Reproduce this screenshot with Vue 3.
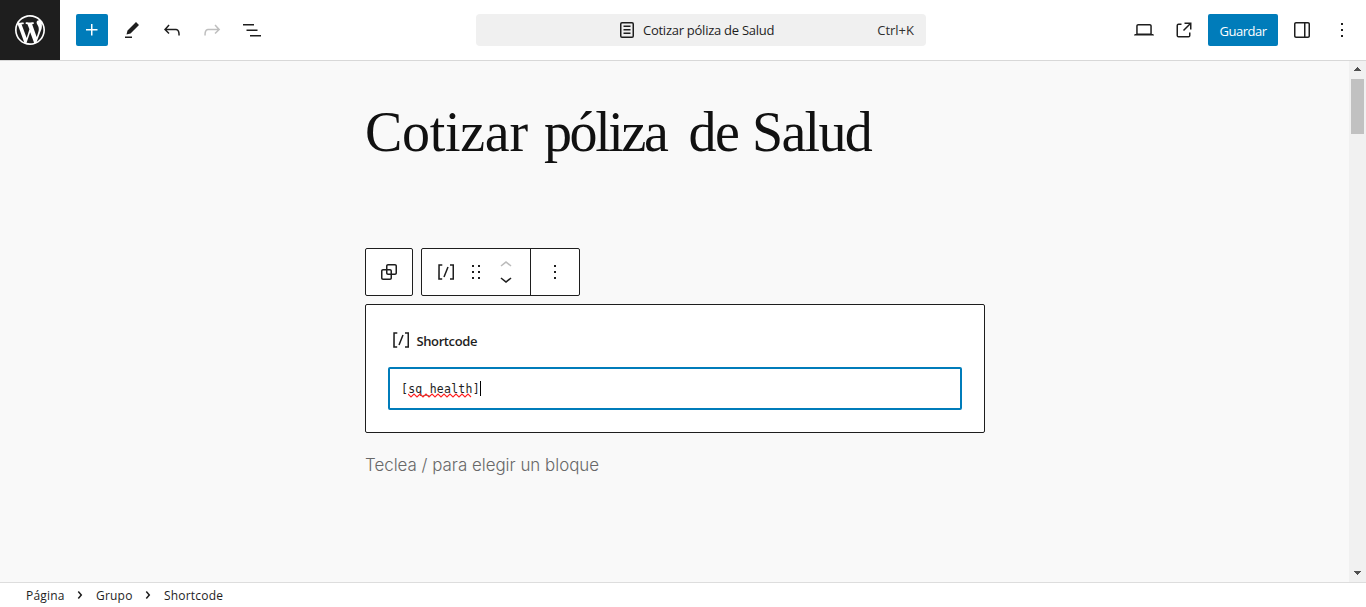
<script setup>
const icons = {
  wordpress: 'M20 10c0-5.51-4.49-10-10-10C4.48 0 0 4.49 0 10c0 5.52 4.48 10 10 10 5.51 0 10-4.48 10-10zM7.78 15.37L4.37 6.22c.55-.02 1.17-.08 1.17-.08.5-.06.44-1.13-.06-1.11 0 0-1.45.11-2.37.11-.18 0-.37 0-.58-.01C4.12 2.69 6.87 1.11 10 1.11c2.33 0 4.45.87 6.05 2.34-.68-.11-1.65.39-1.65 1.58 0 .74.45 1.36.9 2.1.35.61.55 1.36.55 2.46 0 1.49-1.4 5-1.4 5l-3.03-8.37c.54-.02.82-.17.82-.17.5-.05.44-1.25-.06-1.22 0 0-1.44.12-2.38.12-.87 0-2.33-.12-2.33-.12-.5-.03-.56 1.2-.06 1.22l.92.08 1.26 3.41zM17.41 10c.24-.64.74-1.87.43-4.25.7 1.29 1.05 2.71 1.05 4.25 0 3.29-1.73 6.24-4.4 7.78.97-2.59 1.94-5.2 2.92-7.78zM6.1 18.09C3.12 16.65 1.11 13.53 1.11 10c0-1.3.23-2.48.72-3.59C3.25 10.3 4.67 14.2 6.1 18.09zm4.03-6.63l2.58 6.98c-.86.29-1.76.45-2.71.45-.79 0-1.57-.11-2.29-.33.81-2.38 1.62-4.74 2.42-7.1z',
  plus: 'M11 12.5V17.5H12.5V12.5H17.5V11H12.5V6H11V11H6V12.5H11Z',
  edit: 'm19 7-3-3-8.5 8.5-1 4 4-1L19 7Zm-7 11.5H5V20h7v-1.5Z',
  undo: 'M18.3 11.7c-.6-.6-1.4-.9-2.3-.9H6.7l2.9-3.3-1.1-1-4.5 5L8.5 16l1-1-2.7-2.7H16c.5 0 .9.2 1.3.5 1 1 1 3.4 1 4.5v.3h1.5v-.2c0-1.5 0-4.3-1.5-5.7z',
  redo: 'M15.6 6.5l-1.1 1 2.9 3.3H8c-.9 0-1.7.3-2.3.9-1.4 1.5-1.4 4.2-1.4 5.6v.2h1.5v-.3c0-1.1 0-3.5 1-4.5.3-.3.7-.5 1.3-.5h9.2L14.5 15l1.1 1.1 4.6-4.6-4.6-5z',
  list: 'M3 6h11v1.5H3V6Zm3.5 5.5h11V13h-11v-1.5ZM21 17H10v1.5h11V17Z',
  page: 'M15.5 7.5h-7V9h7V7.5Zm-7 3.5h7v1.5h-7V11Zm7 3.5h-7V16h7v-1.5ZM17 4H7a2 2 0 0 0-2 2v12a2 2 0 0 0 2 2h10a2 2 0 0 0 2-2V6a2 2 0 0 0-2-2ZM7 5.5h10a.5.5 0 0 1 .5.5v12a.5.5 0 0 1-.5.5H7a.5.5 0 0 1-.5-.5V6a.5.5 0 0 1 .5-.5Z',
  desktop: 'M20.5 16h-.7V8c0-1.1-.9-2-2-2H6.2c-1.1 0-2 .9-2 2v8h-.7c-.8 0-1.5.7-1.5 1.5h20c0-.8-.7-1.5-1.5-1.5zM5.7 8c0-.3.2-.5.5-.5h11.6c.3 0 .5.2.5.5v7.6H5.7V8z',
  external: 'M19.5 4.5h-7V6h4.44l-5.97 5.97 1.06 1.06L18 7.06v4.44h1.5v-7Zm-13 1a2 2 0 0 0-2 2v10a2 2 0 0 0 2 2h10a2 2 0 0 0 2-2v-3H17v3a.5.5 0 0 1-.5.5h-10a.5.5 0 0 1-.5-.5v-10a.5.5 0 0 1 .5-.5h3V5.5h-3Z',
  drawer: 'M18 4H6c-1.1 0-2 .9-2 2v12c0 1.1.9 2 2 2h12c1.1 0 2-.9 2-2V6c0-1.1-.9-2-2-2zm-4 14.5H6c-.3 0-.5-.2-.5-.5V6c0-.3.2-.5.5-.5h8v13zm4.5-.5c0 .3-.2.5-.5.5h-2.5v-13H18c.3 0 .5.2.5.5v12z',
  more: 'M13 19h-2v-2h2v2zm0-6h-2v-2h2v2zm0-6h-2V5h2v2z',
  group: 'M18 4h-7c-1.1 0-2 .9-2 2v3H6c-1.1 0-2 .9-2 2v7c0 1.1.9 2 2 2h7c1.1 0 2-.9 2-2v-3h3c1.1 0 2-.9 2-2V6c0-1.1-.9-2-2-2zm-4.5 14c0 .3-.2.5-.5.5H6c-.3 0-.5-.2-.5-.5v-7c0-.3.2-.5.5-.5h3V13c0 1.1.9 2 2 2h2.5v3zm0-4.5H11c-.3 0-.5-.2-.5-.5v-2.5H13c.3 0 .5.2.5.5v2.5zm5-.5c0 .3-.2.5-.5.5h-3V11c0-1.1-.9-2-2-2h-2.5V6c0-.3.2-.5.5-.5h7c.3 0 .5.2.5.5v7z',
  shortcode: 'M16 4.2v1.5h2.5v12.5H16v1.5h4V4.2h-4zM4.2 19.8h4v-1.5H5.8V5.8h2.5V4.2h-4l-.1 15.6zm5.1-3.1l1.4.6 4-10-1.4-.6-4 10z',
  drag: 'M8 7h2V5H8v2zm0 6h2v-2H8v2zm0 6h2v-2H8v2zm6-14v2h2V5h-2zm0 8h2v-2h-2v2zm0 6h2v-2h-2v2z',
  up: 'M6.5 12.4L12 8l5.5 4.4-.9 1.2L12 10l-4.5 3.6-1-1.2z',
  down: 'M17.5 11.6L12 16l-5.5-4.4.9-1.2L12 14l4.5-3.6 1 1.2z',
  right: 'M10.86 8.04L14.28 12.03L10.86 16.02L9.72 15.04L12.3 12.03L9.72 9.02L10.86 8.04Z',
}
const left = ['edit', 'undo', 'redo', 'list']
const crumbs = ['Página', 'Grupo', 'Shortcode']
</script>

<template>
  <div class="editor">
    <header class="topbar">
      <div class="logo">
        <svg width="36" height="36" viewBox="-2 -2 24 24"><path :d="icons.wordpress" /></svg>
      </div>
      <div class="tools">
        <button class="btn primary"><svg class="ic"><path :d="icons.plus" /></svg></button>
        <button v-for="n in left" :key="n" class="btn" :class="{ off: n === 'redo' }">
          <svg class="ic"><path :d="icons[n]" /></svg>
        </button>
      </div>
      <div class="command">
        <svg class="ic"><path fill-rule="evenodd" :d="icons.page" /></svg>
        <span class="doc">Cotizar póliza de Salud</span>
        <span class="keys">Ctrl+K</span>
      </div>
      <div class="actions">
        <button class="btn"><svg class="ic"><path :d="icons.desktop" /></svg></button>
        <button class="btn"><svg class="ic"><path :d="icons.external" /></svg></button>
        <button class="btn save">Guardar</button>
        <button class="btn"><svg class="ic"><path :d="icons.drawer" /></svg></button>
        <button class="btn"><svg class="ic"><path :d="icons.more" /></svg></button>
      </div>
    </header>

    <div class="stage">
      <main class="canvas">
        <h1><span class="w1">Cotizar </span><span class="w2">póliza </span><span class="w3">de </span><span class="w4">Salud</span></h1>
        <div class="toolbars">
          <div class="bar parent"><svg class="ic"><path :d="icons.group" /></svg></div>
          <div class="bar block">
            <svg class="ic"><path :d="icons.shortcode" /></svg>
            <svg class="ic drag"><path :d="icons.drag" /></svg>
            <div class="movers">
              <svg class="mv dim" viewBox="5 7 14 8"><path :d="icons.up" /></svg>
              <svg class="mv" viewBox="5 9 14 8"><path :d="icons.down" /></svg>
            </div>
            <div class="opts"><svg class="ic"><path :d="icons.more" /></svg></div>
          </div>
        </div>
        <section class="shortcode">
          <div class="label">
            <svg class="ic"><path :d="icons.shortcode" /></svg>
            <span>Shortcode</span>
          </div>
          <div class="field">
            <span>[</span><span class="spell">sq_health<svg class="wave" width="66" height="5" viewBox="0 0 66 5"><path d="M0 1l3 3 3-3 3 3 3-3 3 3 3-3 3 3 3-3 3 3 3-3 3 3 3-3 3 3 3-3 3 3 3-3 3 3 3-3 3 3 3-3 3 3" /></svg></span><span>]</span><i class="caret"></i>
          </div>
        </section>
        <p class="hint">Teclea / para elegir un bloque</p>
      </main>
      <div class="scroll">
        <svg width="17" height="17" viewBox="0 0 17 17" shape-rendering="crispEdges"><path d="M4.5 10h8L8.5 5.5z" /></svg>
        <div class="thumb"></div>
        <svg width="17" height="17" viewBox="0 0 17 17" shape-rendering="crispEdges"><path d="M4.5 6h8l-4 4.5z" /></svg>
      </div>
    </div>

    <footer class="crumbs">
      <template v-for="(c, i) in crumbs" :key="c">
        <svg v-if="i" class="ic sep"><path :d="icons.right" /></svg>
        <span :class="'c' + i">{{ c }}</span>
      </template>
    </footer>
  </div>
</template>

<style>
body { margin: 0; overflow: hidden; }
</style>

<style scoped>
* { box-sizing: border-box; }
.editor { width: 1366px; height: 607px; display: flex; flex-direction: column; background: #fff; color: #1e1e1e; font: 13px/20px "Open Sans", "Noto Sans", sans-serif; overflow: hidden; }
svg { display: block; flex: none; fill: currentColor; }
.ic { width: 24px; height: 24px; }
.topbar { height: 61px; flex: none; display: flex; align-items: flex-start; border-bottom: 1px solid #d8d8d8; }
.logo { width: 60px; height: 60px; background: #1e1e1e; color: #fff; display: flex; align-items: center; justify-content: center; }
.tools { display: flex; gap: 8px; padding: 14px 0 0 16px; width: 416px; }
.btn { width: 32px; height: 32px; padding: 0; border: 0; border-radius: 2px; background: none; color: #1e1e1e; display: flex; align-items: center; justify-content: center; font: inherit; }
.primary, .save { background: #007cba; color: #fff; }
.off { color: #bfbfbf; }
.save { width: 70px; font-weight: 500; letter-spacing: -0.5px; padding-top: 2px; }
.command { width: 450px; height: 32px; margin-top: 14px; background: #f0f0f0; border-radius: 4px; display: flex; align-items: center; padding: 0 12px 0 139px; }
.doc { margin-left: 4px; width: 170px; white-space: nowrap; letter-spacing: -0.26px; }
.keys { margin-left: auto; color: #2f2f2f; white-space: nowrap; }
.actions { margin-left: auto; display: flex; gap: 8px; padding: 14px 8px 0 0; }
.stage { flex: 1; display: flex; min-height: 0; background: #f9f9f9; }
.canvas { flex: 1; padding-left: 365px; }
h1 { margin: 35px 0 0; height: 74px; font: 400 56px/72px "Liberation Serif", serif; color: #111; white-space: pre; display: flex; }
.w1 { width: 179px; letter-spacing: -0.3px; }
.w2 { width: 144.5px; letter-spacing: -2.4px; }
.w3 { width: 63.5px; letter-spacing: -1.5px; }
.w4 { letter-spacing: -1.7px; }
.toolbars { display: flex; gap: 8px; margin-top: 78px; }
.bar { height: 48px; background: #fff; border: 1px solid #1e1e1e; border-radius: 2px; display: flex; align-items: center; }
.parent { width: 48px; justify-content: center; }
.block { width: 159px; padding-left: 12px; }
.drag { margin-left: 6px; }
.movers { display: flex; flex-direction: column; gap: 8px; margin-left: 11px; width: 14px; }
.mv { width: 14px; height: 8px; }
.dim { color: #bbb; }
.opts { margin-left: auto; width: 49px; height: 46px; border-left: 1px solid #1e1e1e; display: flex; align-items: center; justify-content: center; }
.shortcode { width: 620px; height: 129px; margin-top: 8px; background: #fff; border: 1px solid #1e1e1e; border-radius: 2px; padding: 23px 22px 0; }
.label { display: flex; align-items: center; height: 24px; font-weight: 600; padding-left: 1px; }
.label span { margin-left: 3.5px; letter-spacing: -0.4px; padding-top: 2px; }
.field { margin-top: 15px; width: 574px; height: 43px; border: 2px solid #007cba; border-radius: 2px; display: flex; align-items: center; padding-left: 11px; font: 11.5px/20px "DejaVu Sans Mono", monospace; letter-spacing: 0.24px; }
.field > span { padding-top: 1px; }
.spell { position: relative; }
.wave { position: absolute; left: 0; top: 15px; fill: none; stroke: #f22; stroke-width: 1.1; }
.caret { width: 1px; height: 15px; background: #000; }
.hint { margin: 19px 0 0; font: 300 16.9px/27px Inter, sans-serif; color: #686868; white-space: nowrap; }
.scroll { width: 17px; background: #f1f1f1; color: #505050; display: flex; flex-direction: column; }
.thumb { width: 13px; height: 55px; margin: 1px 2px auto; background: #c1c1c1; }
.crumbs { height: 25px; flex: none; border-top: 1px solid #ddd; display: flex; align-items: center; padding-left: 26px; font-size: 12px; }
.crumbs span { white-space: nowrap; letter-spacing: 0.2px; padding-top: 2px; }
.sep { margin: 0 4px; }
.c0 { width: 38px; }
.c1 { width: 36px; }
</style>
